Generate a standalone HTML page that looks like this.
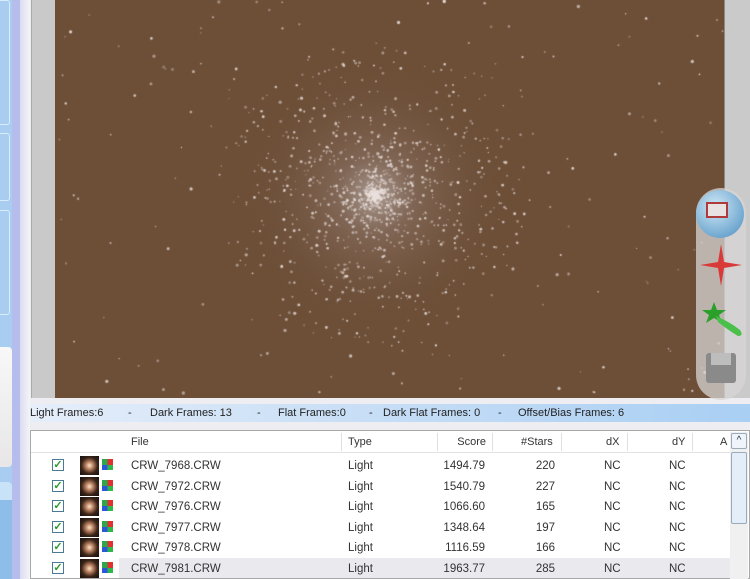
<!DOCTYPE html>
<html><head><meta charset="utf-8"><style>
*{margin:0;padding:0;box-sizing:border-box}
body{width:750px;height:579px;overflow:hidden;background:#eeeef2;font-family:"Liberation Sans",sans-serif;position:relative}
.abs{position:absolute}
#left1{left:0;top:0;width:12px;height:579px;background:#a9cdf0}
#left2{left:12px;top:0;width:8px;height:579px;background:#b4bdec}
#left3{left:20px;top:0;width:10px;height:579px;background:linear-gradient(90deg,#dcdcf2,#f4f4f8)}
#gray{left:31px;top:0;width:24px;height:398px;background:#c9c9c9;border-left:1px solid #aaa}
#img{left:55px;top:0;width:669px;height:398px;background:#6d4f38}
#rgray{left:724px;top:0;width:26px;height:398px;background:#cacaca;border-left:1px solid #8a8a8a}
#tool{left:696px;top:188px;width:50px;height:212px;border-radius:25px;background:rgba(215,212,212,0.75)}
#status{left:30px;top:404px;width:720px;height:18px;background:linear-gradient(90deg,#e6eefa,#cbe0f6 40%,#a9cff3);font-size:11px;color:#222;line-height:18px;white-space:pre}
#status span{position:absolute;top:0}
#table{left:30px;top:430px;width:720px;height:149px;background:#fff;border:1px solid #a8a8a8}
.hdr{position:absolute;top:0;height:22px;left:0;width:700px;border-bottom:1px solid #e2e2e2;font-size:11px;color:#333}
.hdr span,.row span{position:absolute;top:5px}
.sep{position:absolute;top:2px;width:1px;height:18px;background:#e0e0e0}
.row{position:absolute;left:0;width:700px;height:20px;font-size:11.5px;color:#333}
.cb{position:absolute;left:21px;top:4px;width:12px;height:12px;border:1px solid #4a7a94;background:#fff;color:#2a9a2a;font-size:11px;line-height:10px;text-align:center;font-weight:bold}
.th{position:absolute;left:49px;top:1px;width:19px;height:19px;background:radial-gradient(circle,#fde6d0 0,#b88060 28%,#3a2418 60%,#141010 100%)}
.ci{position:absolute;left:71px;top:4px;width:11px;height:11px;background:linear-gradient(90deg,#2fa64a 50%,#e03030 50%);}
.ci:after{content:"";position:absolute;left:0;top:6px;width:11px;height:5px;background:linear-gradient(90deg,#2b58d8 50%,#2fb84a 50%)}
.r{text-align:right}
#sb{left:730px;top:432px;width:18px;height:147px;background:#f0f0f0}
</style></head><body>
<div class="abs" id="left1"></div><div class="abs" id="left2"></div><div class="abs" id="left3"></div>
<div class="abs" style="left:0;top:0;width:10px;height:125px;border:1px solid #d8ecfc;border-left:none;border-radius:0 3px 3px 0"></div>
<div class="abs" style="left:0;top:133px;width:10px;height:68px;border:1px solid #d8ecfc;border-left:none;border-radius:0 3px 3px 0"></div>
<div class="abs" style="left:0;top:210px;width:10px;height:105px;border:1px solid #d8ecfc;border-left:none;border-radius:0 3px 3px 0"></div>
<div class="abs" style="left:0;top:347px;width:12px;height:120px;background:linear-gradient(#f8f8f8,#e8e6e6);border-radius:0 4px 4px 0"></div>
<div class="abs" style="left:0;top:482px;width:12px;height:97px;background:#8fbdea;border-radius:0 4px 0 0"></div>
<div class="abs" style="left:0;top:482px;width:12px;height:18px;background:#c8e2f8;border-radius:0 4px 0 0"></div>
<div class="abs" id="gray"></div>
<canvas class="abs" id="img" width="669" height="398"></canvas>
<div class="abs" id="rgray"></div>
<div class="abs" id="tool">
<div class="abs" style="left:0;top:2px;width:48px;height:48px;border-radius:50%;background:radial-gradient(circle at 40% 35%,#cfe8f6,#7fb2d6 60%,#4d8dc0)"></div>
<div class="abs" style="left:10px;top:14px;width:22px;height:16px;border:2px solid #b03a3a;background:#e8e2e2"></div>
<svg class="abs" style="left:0;top:54px" width="50" height="46"><path d="M25 2 L28 20 L46 23 L28 26 L25 44 L22 26 L4 23 L22 20Z" fill="#d83a3a"/></svg>
<svg class="abs" style="left:4px;top:112px" width="46" height="40"><path d="M14 2 L17 10 L26 10 L19 15 L22 23 L14 18 L6 23 L9 15 L2 10 L11 10Z" fill="#2aa02a"/><path d="M16 16 Q30 22 40 30 Q44 36 38 36 Q28 30 18 22Z" fill="#4ac04a"/></svg>
<div class="abs" style="left:10px;top:165px;width:30px;height:30px;background:#8a8a8a;border-radius:3px"></div>
<div class="abs" style="left:15px;top:165px;width:20px;height:12px;background:#bdbdbd"></div>
</div>
<div class="abs" id="status"><span style="left:0">Light Frames:6</span><span style="left:98px">-</span><span style="left:120px">Dark Frames: 13</span><span style="left:227px">-</span><span style="left:248px">Flat Frames:0</span><span style="left:339px">-</span><span style="left:353px">Dark Flat Frames: 0</span><span style="left:468px">-</span><span style="left:488px">Offset/Bias Frames: 6</span></div>
<div class="abs" id="table">
<div class="hdr">
<span style="left:100px">File</span><div class="sep" style="left:310px"></div>
<span style="left:317px">Type</span><div class="sep" style="left:406px"></div>
<span style="right:245px" >Score</span><div class="sep" style="left:461px"></div>
<span style="left:490px">#Stars</span><div class="sep" style="left:530px"></div>
<span style="left:575px">dX</span><div class="sep" style="left:596px"></div>
<span style="left:641px">dY</span><div class="sep" style="left:661px"></div>
<span style="left:689px">A</span>
</div>
<div id="rows"></div>
</div>
<div class="abs" id="sb"><div class="abs" style="left:1px;top:1px;width:16px;height:16px;border:1px solid #9ab;border-radius:2px;background:#eef4fa;font-size:10px;text-align:center;line-height:14px;color:#234">^</div><div class="abs" style="left:1px;top:20px;width:16px;height:72px;border:1px solid #9ab;border-radius:2px;background:#e4eef8"></div></div>
<script>
var d=[["CRW_7968.CRW","1494.79","220"],["CRW_7972.CRW","1540.79","227"],["CRW_7976.CRW","1066.60","165"],["CRW_7977.CRW","1348.64","197"],["CRW_7978.CRW","1116.59","166"],["CRW_7981.CRW","1963.77","285"]];
var h="";d.forEach(function(r,i){var t=24+i*20.5;h+='<div class="row" style="top:'+t+'px">'+(i==5?'<div style="position:absolute;left:88px;top:0;width:612px;height:20px;background:#e9e9ee"></div>':'')+'<div class="cb">✓</div><div class="th"></div><div class="ci"></div><span style="left:100px">'+r[0]+'</span><span style="left:317px">Light</span><span class="r" style="right:246px">'+r[1]+'</span><span class="r" style="right:176px">'+r[2]+'</span><span style="left:573px">NC</span><span style="left:638px">NC</span></div>'});
document.getElementById("rows").innerHTML=h;
var c=document.getElementById("img").getContext("2d");
c.fillStyle="#6d4f38";c.fillRect(0,0,669,398);
var g=c.createRadialGradient(320,195,0,320,195,130);g.addColorStop(0,"rgba(200,190,188,0.7)");g.addColorStop(0.3,"rgba(150,128,118,0.45)");g.addColorStop(1,"rgba(110,80,56,0)");c.fillStyle=g;c.fillRect(0,0,669,398);
var s=12345;function R(){s=(s*16807)%2147483647;return s/2147483647}
for(var i=0;i<1300;i++){var a=R()*6.283,rr=Math.pow(R(),1.9)*160;var x=320+Math.cos(a)*rr,y=195+Math.sin(a)*rr*0.95;c.fillStyle="rgba(235,225,222,"+(0.3+R()*0.55)+")";c.beginPath();c.arc(x,y,0.6+R()*0.9,0,6.3);c.fill()}
for(var i=0;i<200;i++){c.fillStyle="rgba(235,225,220,"+(0.3+R()*0.6)+")";c.beginPath();c.arc(R()*669,R()*398,0.6+R()*1.1,0,6.3);c.fill()}
</script>
</body></html>
